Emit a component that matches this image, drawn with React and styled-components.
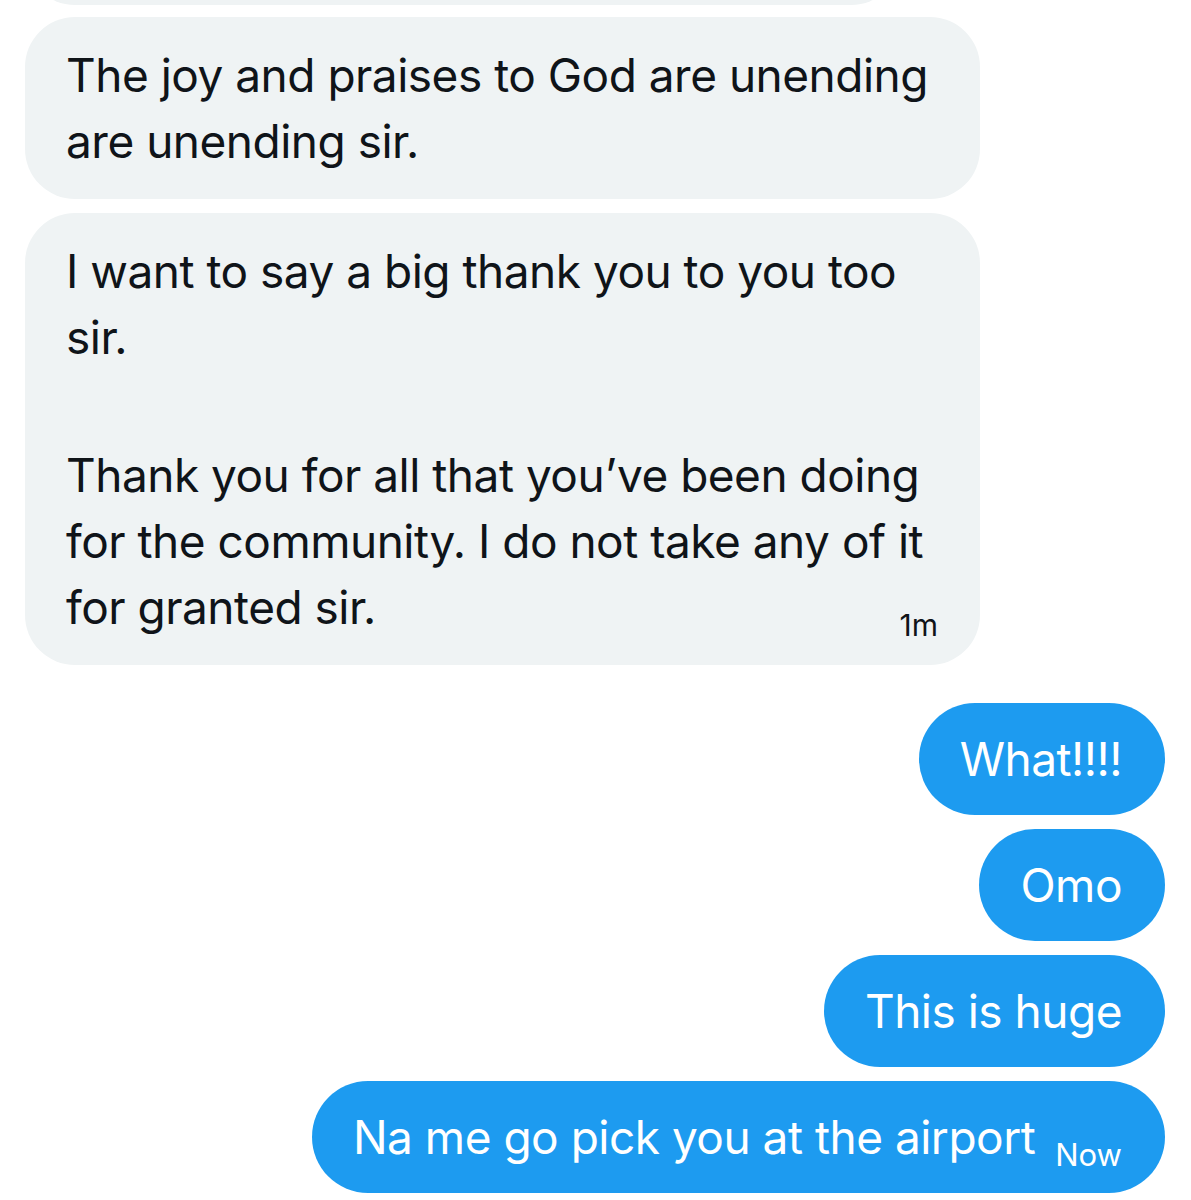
import React from "react";
import styled, { createGlobalStyle } from "styled-components";

const GlobalStyle = createGlobalStyle`
  html, body {
    margin: 0;
    padding: 0;
    background: #ffffff;
  }
  body {
    font-family: Inter, "Noto Sans", "Liberation Sans", sans-serif;
    -webkit-font-smoothing: antialiased;
  }
`;

const Screen = styled.div`
  width: 1191px;
  height: 1200px;
  overflow: hidden;
  display: flex;
  flex-direction: column;
  padding: 0 26px 0 25px;
  box-sizing: border-box;
`;

const Group = styled.div`
  display: flex;
  flex-direction: column;
  align-items: ${(p) => (p.$mine ? "flex-end" : "flex-start")};
  gap: 14px;
  margin-top: ${(p) => p.$top || 0}px;
`;

const Bubble = styled.div`
  box-sizing: border-box;
  width: ${(p) => (p.$width ? `${p.$width}px` : "auto")};
  padding: ${(p) => (p.$mine ? "23px 43px 23px 41px" : "25px 42px 25px 41px")};
  border-radius: ${(p) => (p.$mine ? "56px" : "50px")};
  background: ${(p) => (p.$mine ? "#1d9bf0" : "#eff3f4")};
  color: ${(p) => (p.$mine ? "#ffffff" : "#0f1419")};
  font-size: 46px;
  line-height: 66px;
  letter-spacing: -0.5px;
  white-space: nowrap;
`;

const Sliver = styled(Bubble)`
  height: 100px;
  margin-top: -95px;
  margin-bottom: -2px;
`;

const Line = styled.div`
  min-height: ${(p) => (p.$blank ? 72 : 66)}px;
`;

const LastLine = styled.div`
  display: flex;
  justify-content: space-between;
  align-items: baseline;
  gap: 20px;
`;

const Time = styled.span`
  font-size: ${(p) => (p.$mine ? 31 : 30)}px;
  line-height: 30px;
  letter-spacing: 0;
  position: relative;
  top: ${(p) => (p.$mine ? 12 : 12)}px;
`;

const theirs = [
  {
    lines: ["The joy and praises to God are unending", "are unending sir."],
  },
  {
    lines: [
      "I want to say a big thank you to you too",
      "sir.",
      "",
      "Thank you for all that you\u2019ve been doing",
      "for the community. I do not take any of it",
      "for granted sir.",
    ],
    time: "1m",
  },
];

const mine = [
  { text: "What!!!!" },
  { text: "Omo" },
  { text: "This is huge" },
  { text: "Na me go pick you at the airport", time: "Now" },
];

const Message = ({ lines, time, width, isMine }) => {
  const head = lines.slice(0, -1);
  const last = lines[lines.length - 1];
  return (
    <Bubble $mine={isMine} $width={width}>
      {head.map((l, i) => (
        <Line key={i} $blank={l === ""}>
          {l}
        </Line>
      ))}
      {time ? (
        <LastLine>
          <span>{last}</span>
          <Time $mine={isMine}>{time}</Time>
        </LastLine>
      ) : (
        <Line>{last}</Line>
      )}
    </Bubble>
  );
};

export default function App() {
  return (
    <>
      <GlobalStyle />
      <Screen>
        <Group>
          <Sliver $width={876} />
          {theirs.map((m, i) => (
            <Message key={i} lines={m.lines} time={m.time} width={955} />
          ))}
        </Group>
        <Group $mine $top={38}>
          {mine.map((m, i) => (
            <Message key={i} lines={[m.text]} time={m.time} isMine />
          ))}
        </Group>
      </Screen>
    </>
  );
}
